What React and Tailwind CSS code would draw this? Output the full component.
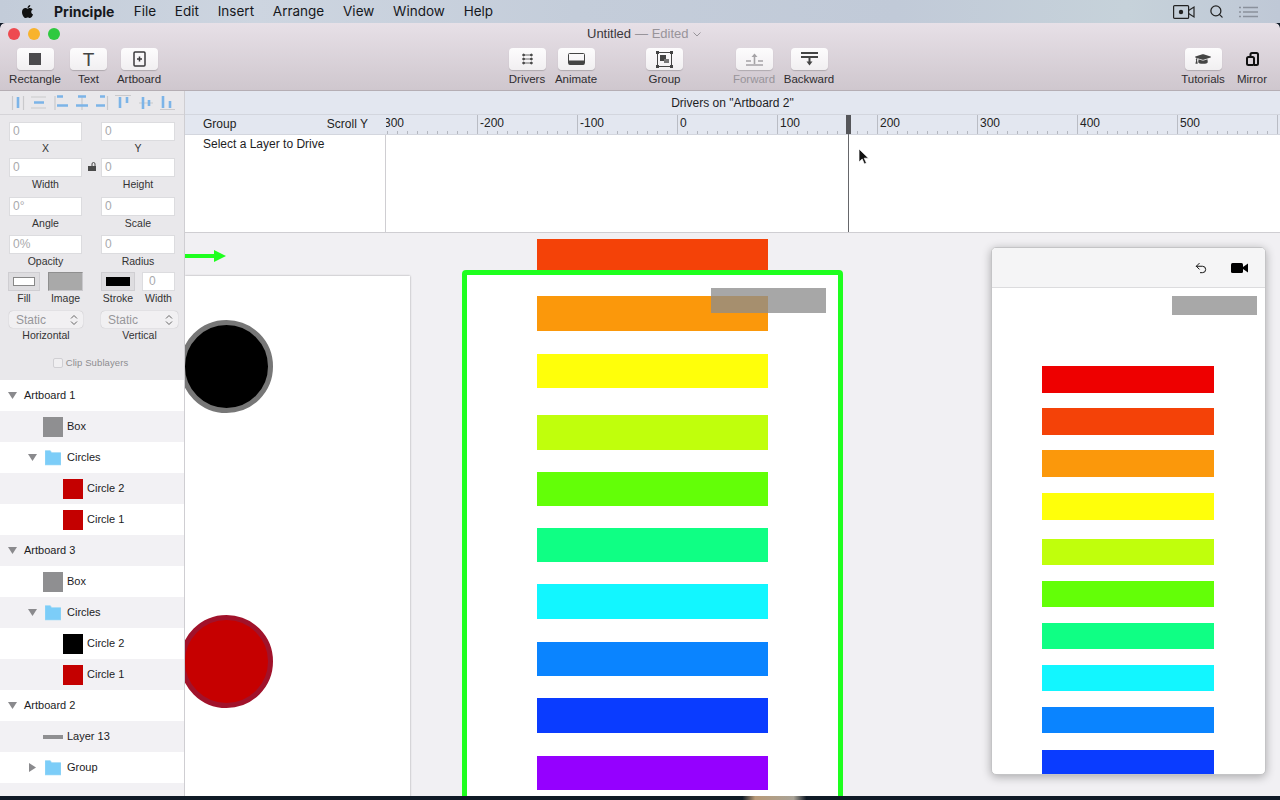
import { FaApple, FaGraduationCap } from 'react-icons/fa';
import { Search, Undo2 } from 'lucide-react';

const menus = ['File', 'Edit', 'Insert', 'Arrange', 'View', 'Window', 'Help'];

function MenuBar() {
  return (
    <div className="h-[23px] shrink-0 flex items-center text-[13.5px] text-[#16181c] font-['Inter',sans-serif] bg-[linear-gradient(90deg,#c3ccd9_0%,#cdd5e0_20%,#c4cdda_45%,#c1cad8_70%,#c6d2da_88%,#bfc8d6_100%)]">
      <FaApple className="ml-[20px] size-[15px] text-[#111]" />
      <span className="ml-[19px] font-bold text-[14px] mr-[0.5px]">Principle</span>
      {menus.map((label) => (
        <span key={label} className="ml-[18.8px]">{label}</span>
      ))}
      <span className="flex-1" />
      <svg width="22" height="14" viewBox="0 0 22 14" fill="none" stroke="#222" strokeWidth="1.2">
        <rect x="0.6" y="0.6" width="15" height="12.8" rx="1" />
        <circle cx="8" cy="7" r="2.2" fill="#222" stroke="none" />
        <path d="M15.6 5.5 21 2v10l-5.4-3.5" />
      </svg>
      <Search className="ml-[14px] size-[15px] text-[#222]" strokeWidth={2} />
      <svg className="ml-[15px] mr-[22px]" width="19" height="12" viewBox="0 0 19 12" stroke="#8a919c" strokeWidth="1.3">
        <path d="M4 1.5h15M4 6h15M4 10.5h15M0 1.5h2M0 6h2M0 10.5h2" />
      </svg>
    </div>
  );
}

function ToolItem({ label, width, children, plain, faded }) {
  return (
    <div className={`flex flex-col items-center shrink-0 ${width}`}>
      <div className={`w-[37px] h-[22px] rounded-[4px] flex items-center justify-center ${plain ? '' : 'bg-gradient-to-b from-[#fdfcfd] to-[#f1eff1] shadow-[0_1px_1px_rgba(0,0,0,0.18)]'}`}>
        {children}
      </div>
      <span className={`mt-[2px] text-[11.5px] leading-[14px] whitespace-nowrap ${faded ? 'text-[#98949a]' : 'text-[#2f2d30]'}`}>{label}</span>
    </div>
  );
}

function Toolbar() {
  return (
    <div className="relative h-[68px] shrink-0 rounded-t-[5px] border-b border-[#b5aeb4] bg-gradient-to-b from-[#e7e0e7] to-[#cfc7ce]">
      <div className="flex items-center gap-[8px] pl-[8px] h-[22px]">
        <span className="size-[12px] rounded-full bg-[#ee4a50]" />
        <span className="size-[12px] rounded-full bg-[#f8b32d]" />
        <span className="size-[12px] rounded-full bg-[#2fc93f]" />
        <div className="ml-[519px] flex items-center text-[13px] text-[#3a383b] whitespace-nowrap">
          Untitled<span className="text-[#98949a] ml-[4px]">— Edited</span>
          <svg className="ml-[4px]" width="8" height="5" viewBox="0 0 8 5" fill="none" stroke="#98949a" strokeWidth="1"><path d="M.5.5 4 4 7.5.5" /></svg>
        </div>
      </div>
      <div className="flex pt-[3px]">
        <div className="ml-[9px]" />
        <ToolItem label="Rectangle" width="w-[52px]">
          <span className="size-[12px] bg-[#4b4a4d]" />
        </ToolItem>
        <div className="ml-[9px]" />
        <ToolItem label="Text" width="w-[37px]">
          <span className="text-[19px] leading-none text-[#444]">T</span>
        </ToolItem>
        <div className="ml-[6px]" />
        <ToolItem label="Artboard" width="w-[52px]">
          <svg width="13" height="16" viewBox="0 0 13 16" fill="none" stroke="#3b3a3d" strokeWidth="1.5">
            <rect x="1" y="1" width="11" height="14" rx="1" />
            <path d="M4 8h5M6.5 5.5v5" />
          </svg>
        </ToolItem>
        <div className="ml-[342px]" />
        <ToolItem label="Drivers" width="w-[40px]">
          <svg width="11" height="12" viewBox="0 0 11 12" fill="#444" stroke="#444" strokeWidth="0.8">
            <path d="M2 2h7M2 6h7M2 10h7" />
            <circle cx="1.6" cy="2" r="1" /><circle cx="9.4" cy="2" r="1" />
            <circle cx="1.6" cy="6" r="1" /><circle cx="9.4" cy="6" r="1" />
            <circle cx="1.6" cy="10" r="1" /><circle cx="9.4" cy="10" r="1" />
          </svg>
        </ToolItem>
        <div className="ml-[4px]" />
        <ToolItem label="Animate" width="w-[50px]">
          <svg width="17" height="12" viewBox="0 0 17 12" fill="none" stroke="#444" strokeWidth="1">
            <rect x="0.5" y="0.5" width="16" height="11" rx="1" />
            <rect x="1" y="7.5" width="15" height="4" fill="#444" stroke="none" />
          </svg>
        </ToolItem>
        <div className="ml-[45px]" />
        <ToolItem label="Group" width="w-[37px]">
          <svg width="17" height="17" viewBox="0 0 17 17" fill="none" stroke="#444" strokeWidth="1">
            <rect x="1.5" y="1.5" width="14" height="14" />
            <rect x="0" y="0" width="3" height="3" fill="#444" stroke="none" />
            <rect x="14" y="0" width="3" height="3" fill="#444" stroke="none" />
            <rect x="0" y="14" width="3" height="3" fill="#444" stroke="none" />
            <rect x="14" y="14" width="3" height="3" fill="#444" stroke="none" />
            <rect x="4" y="4" width="6" height="6" fill="#444" stroke="none" />
            <rect x="8" y="8" width="5" height="4" fill="#777" stroke="none" />
          </svg>
        </ToolItem>
        <div className="ml-[49px]" />
        <ToolItem label="Forward" width="w-[44px]" faded>
          <svg width="17" height="13" viewBox="0 0 17 13" fill="#a5a3a6" stroke="#a5a3a6" strokeWidth="1.6">
            <path d="M0 8h5M12 8h5M0 12h17M8.5 3v8" fill="none" />
            <path d="M5.5 4 8.5 .5 11.500 4z" stroke="none" />
          </svg>
        </ToolItem>
        <div className="ml-[8px]" />
        <ToolItem label="Backward" width="w-[50px]">
          <svg width="17" height="14" viewBox="0 0 17 14" fill="#444" stroke="#444" strokeWidth="2">
            <path d="M0 1h17M0 5h17M8.500 5v5" fill="none" />
            <path d="M5.500 9.500 8.500 13.500 11.500 9.500z" stroke="none" />
          </svg>
        </ToolItem>
        <div className="ml-[345px]" />
        <ToolItem label="Tutorials" width="w-[48px]">
          <FaGraduationCap className="size-[16px] text-[#444]" />
        </ToolItem>
        <div className="ml-[7px]" />
        <ToolItem label="Mirror" width="w-[36px]" plain>
          <svg width="13" height="14" viewBox="0 0 13 14" fill="none" stroke="#111" strokeWidth="2">
            <path d="M4.500 5V2.500A1.500 1.500 0 0 1 6 1h4.500A1.500 1.500 0 0 1 12 2.500v9a1.500 1.500 0 0 1-1.500 1.500H8" />
            <rect x="1" y="5" width="7" height="8" rx="1.500" />
          </svg>
        </ToolItem>
      </div>
    </div>
  );
}

function AlignIcons() {
  return (
    <svg className="block" width="185" height="23" viewBox="0 91 185 23" fill="none">
      <path d="M12.500 96v14M23.500 96v14M31 97h15M31 108h15M55 96v14M82 96v14M107.500 96v14M115 95.500h16M139 103h14M160 109.500h15" stroke="#c9c9cc" strokeWidth="1.200" />
      <path d="M18 97v11M34 102.500h10M57 96.500h6M57 105.500h11M78 96.500h8M76 105.500h12M100 96.500h5M96 105.500h9M120 97v11M127 97v6M143 97v12M149 100v6M163 96v12M170 101v7" stroke="#7cb4e8" strokeWidth="2.600" />
    </svg>
  );
}

function Field({ value, label, height }) {
  return (
    <div className={`flex flex-col items-center ${height}`}>
      <div className="w-full h-[19px] shrink-0 bg-white border border-[#dcdcdf] px-[3px] text-[12px] leading-[17px] text-[#a9a9ac]">{value}</div>
      <span className="mt-[1px] text-[10.5px] leading-[12px] text-[#333]">{label}</span>
    </div>
  );
}

function StaticSelect({ label }) {
  return (
    <div className="flex flex-col items-center">
      <div className="w-full h-[17px] rounded-[4px] bg-[#f1f0f2] shadow-[0_0_1px_rgba(0,0,0,0.3)] flex items-center pl-[7px] pr-[5px] text-[12px] text-[#97979a]">
        <span className="flex-1">Static</span>
        <svg width="8" height="12" viewBox="0 0 8 12" fill="none" stroke="#666" strokeWidth="1">
          <path d="M1 4.500 4 1.500l3 3M1 7.500l3 3 3-3" />
        </svg>
      </div>
      <span className="mt-[1px] text-[10.5px] leading-[12px] text-[#333]">{label}</span>
    </div>
  );
}

function Inspector() {
  return (
    <div className="h-[289px] shrink-0 bg-[#e9e8eb]">
      <div className="border-b border-[#d5d4d8] h-[24px]">
        <AlignIcons />
      </div>
      <div className="relative px-[9px] pt-[7px]">
        <div className="grid grid-cols-[73px_74px] gap-x-[19px]">
          <Field value="0" label="X" height="h-[36px]" />
          <Field value="0" label="Y" height="h-[36px]" />
          <Field value="0" label="Width" height="h-[39px]" />
          <Field value="0" label="Height" height="h-[39px]" />
          <Field value="0°" label="Angle" height="h-[38px]" />
          <Field value="0" label="Scale" height="h-[38px]" />
          <Field value="0%" label="Opacity" height="h-[37px]" />
          <Field value="0" label="Radius" height="h-[37px]" />
        </div>
        <svg className="absolute left-[88px] top-[47px]" width="9" height="9" viewBox="0 0 9 9" fill="#4a4a4a">
          <rect x="0" y="4" width="8" height="5" />
          <path d="M4 4V2a1.500 1.500 0 0 1 3 0v2" fill="none" stroke="#4a4a4a" strokeWidth="1" />
        </svg>
        <div className="flex -ml-px">
          <div className="flex flex-col items-center w-[32px]">
            <div className="w-[32px] h-[19px] bg-[#dedde0] border border-[#cfced2] flex items-center justify-center">
              <span className="w-[22px] h-[9px] bg-white border border-[#888]" />
            </div>
            <span className="mt-[1px] text-[10.5px] leading-[12px] text-[#333]">Fill</span>
          </div>
          <div className="flex flex-col items-center w-[35px] ml-[8px]">
            <div className="w-[35px] h-[19px] bg-[#a9a9a9] border border-[#c9c8cc] border-t-[#8f8f8f] border-l-[#8f8f8f]" />
            <span className="mt-[1px] text-[10.5px] leading-[12px] text-[#333]">Image</span>
          </div>
          <div className="flex flex-col items-center w-[34px] ml-[18px]">
            <div className="w-[34px] h-[19px] bg-[#dedde0] border border-[#cfced2] flex items-center justify-center">
              <span className="w-[24px] h-[9px] bg-black" />
            </div>
            <span className="mt-[1px] text-[10.5px] leading-[12px] text-[#333]">Stroke</span>
          </div>
          <div className="flex flex-col items-center w-[33px] ml-[7px]">
            <div className="w-[33px] h-[19px] bg-white border border-[#dcdcdf] px-[6px] text-[12px] leading-[17px] text-[#a9a9ac]">0</div>
            <span className="mt-[1px] text-[10.5px] leading-[12px] text-[#333]">Width</span>
          </div>
        </div>
        <div className="mt-[7px] grid grid-cols-[74px_77px] gap-x-[18px]">
          <StaticSelect label="Horizontal" />
          <StaticSelect label="Vertical" />
        </div>
        <div className="mt-[16px] flex items-center justify-center -ml-[3px]">
          <span className="size-[10px] bg-[#f0eff1] border border-[#d0cfd3] rounded-[2px]" />
          <span className="ml-[3px] text-[9.5px] leading-[12px] text-[#8d8d90] tracking-[0.1px]">Clip Sublayers</span>
        </div>
      </div>
    </div>
  );
}

function Triangle({ open, className }) {
  return (
    <svg className={className} width="9" height="9" viewBox="0 0 9 9" fill="#8a8a8d">
      {open ? <path d="M0 1h9L4.500 8z" /> : <path d="M1 0l7 4.500L1 9z" />}
    </svg>
  );
}

function Folder() {
  return (
    <svg width="16" height="16" viewBox="0 0 16 16">
      <path d="M0 15V1.500A.8.8 0 0 1 .8.500h4.400l1.500 2h8.500a.8.8 0 0 1 .8.800V15z" fill="#7ccdf8" stroke="#a6dcf6" strokeWidth="0.600" />
    </svg>
  );
}

const layers = [
  { name: 'Artboard 1', kind: 'board' },
  { name: 'Box', kind: 'box' },
  { name: 'Circles', kind: 'folder', open: true },
  { name: 'Circle 2', kind: 'leaf', color: 'bg-[#c40000]' },
  { name: 'Circle 1', kind: 'leaf', color: 'bg-[#c40000]' },
  { name: 'Artboard 3', kind: 'board' },
  { name: 'Box', kind: 'box' },
  { name: 'Circles', kind: 'folder', open: true },
  { name: 'Circle 2', kind: 'leaf', color: 'bg-black' },
  { name: 'Circle 1', kind: 'leaf', color: 'bg-[#c40000]' },
  { name: 'Artboard 2', kind: 'board' },
  { name: 'Layer 13', kind: 'line' },
  { name: 'Group', kind: 'folder', open: false },
];

function LayerRow({ layer, odd }) {
  return (
    <div className={`h-[31px] flex items-center text-[11px] text-[#1c1c1e] ${odd ? 'bg-[#f2f1f4]' : 'bg-white'}`}>
      {layer.kind === 'board' && (
        <>
          <Triangle open className="ml-[8px]" />
          <span className="ml-[7px]">{layer.name}</span>
        </>
      )}
      {layer.kind === 'box' && (
        <>
          <span className="ml-[43px] size-[20px] bg-[#8f8f91]" />
          <span className="ml-[4px]">{layer.name}</span>
        </>
      )}
      {layer.kind === 'line' && (
        <>
          <span className="ml-[43px] w-[20px] h-[4px] bg-[#8f8f91]" />
          <span className="ml-[4px]">{layer.name}</span>
        </>
      )}
      {layer.kind === 'folder' && (
        <>
          <Triangle open={layer.open} className="ml-[28px]" />
          <span className="ml-[8px]"><Folder /></span>
          <span className="ml-[6px]">{layer.name}</span>
        </>
      )}
      {layer.kind === 'leaf' && (
        <>
          <span className={`ml-[63px] size-[20px] ${layer.color}`} />
          <span className="ml-[4px]">{layer.name}</span>
        </>
      )}
    </div>
  );
}

function Sidebar() {
  return (
    <div className="w-[185px] shrink-0 flex flex-col border-r border-[#cfced2] bg-[#f2f1f4]">
      <Inspector />
      <div>
        {layers.map((layer, i) => (
          <LayerRow key={i} layer={layer} odd={i % 2 === 1} />
        ))}
      </div>
    </div>
  );
}

const rulerMarks = ['-300', '-200', '-100', '0', '100', '200', '300', '400', '500', ''];

function Ruler() {
  return (
    <div className="flex-1 overflow-hidden flex">
      <div className="flex shrink-0 -ml-[9px]">
        {rulerMarks.map((mark, i) => (
          <div key={i} className="relative w-[100px] h-[20px] shrink-0 border-l border-[#b9bcc4]">
            <span className="absolute left-[2px] top-[1px] text-[12px] leading-[14px] text-[#222]">{mark}</span>
            <div className="absolute left-0 right-0 bottom-0 h-[4px] bg-[repeating-linear-gradient(90deg,transparent_0,transparent_9px,#b4b7bf_9px,#b4b7bf_10px)]" />
          </div>
        ))}
      </div>
    </div>
  );
}

function DriversPanel() {
  return (
    <div className="relative h-[142px] shrink-0 border-b border-[#cfced2] bg-white">
      <div className="h-[23px] bg-[#e3e7f0] flex items-center justify-center text-[12px] text-[#1d1d1f]">
        Drivers on "Artboard 2"
      </div>
      <div className="h-[21px] bg-[#e3e7f0] border-t border-b border-[#d3d6de] flex text-[12px] text-[#222]">
        <div className="w-[201px] shrink-0 pl-[18px] pr-[18px] pb-[2px] flex items-center justify-between">
          <span>Group</span>
          <span>Scroll Y</span>
        </div>
        <Ruler />
      </div>
      <div className="h-[97px] flex text-[12px] text-[#1d1d1f]">
        <div className="w-[201px] border-r border-[#cfced2] pl-[18px]">Select a Layer to Drive</div>
      </div>
      <div className="absolute left-[661px] top-[24px] w-[5px] h-[19px] bg-[#55565a]" />
      <div className="absolute left-[663px] top-[43px] w-px h-[98px] bg-[#66676b]" />
      <svg className="absolute left-[673px] top-[57px]" width="12" height="17" viewBox="0 0 12 17">
        <path d="M1 1v13l3.200-3 2.200 5 2-1-2.200-4.800H10.500z" fill="#111" stroke="#fff" strokeWidth="0.700" />
      </svg>
    </div>
  );
}

const boardBars = [
  'top-[63px] h-[35px] bg-[#fb980b]',
  'top-[121px] h-[34px] bg-[#ffff0a]',
  'top-[182px] h-[35px] bg-[#c0ff0c]',
  'top-[239px] h-[34px] bg-[#63ff07]',
  'top-[295px] h-[34px] bg-[#0fff84]',
  'top-[351px] h-[35px] bg-[#12f6ff]',
  'top-[409px] h-[34px] bg-[#0a84ff]',
  'top-[465px] h-[35px] bg-[#0a3cff]',
  'top-[523px] h-[34px] bg-[#9500ff]',
];

const mirrorBars = [
  'top-[118px] h-[27px] bg-[#ee0000]',
  'top-[160px] h-[27px] bg-[#f44208]',
  'top-[202px] h-[27px] bg-[#fb980b]',
  'top-[245px] h-[27px] bg-[#ffff0a]',
  'top-[291px] h-[26px] bg-[#c0ff0c]',
  'top-[333px] h-[26px] bg-[#63ff07]',
  'top-[375px] h-[26px] bg-[#0fff84]',
  'top-[417px] h-[26px] bg-[#12f6ff]',
  'top-[459px] h-[26px] bg-[#0a84ff]',
  'top-[502px] h-[26px] bg-[#0a3cff]',
];

function Canvas() {
  return (
    <div className="relative flex-1 overflow-hidden bg-[#f1f0f3]">
      {/* green marker arrow */}
      <svg className="absolute left-0 top-[16px]" width="42" height="14" viewBox="0 0 42 14" fill="#1eff1e">
        <path d="M0 5h29V1l12 6-12 6V9H0z" />
      </svg>

      {/* left artboard */}
      <div className="absolute left-0 top-[43px] w-[225px] h-[530px] bg-white shadow-[0_0_2px_rgba(0,0,0,0.35)]" />
      <div className="absolute left-[-5px] top-[87px] size-[93px] rounded-full bg-black border-[5px] border-[#777777]" />
      <div className="absolute left-[-5px] top-[382px] size-[93px] rounded-full bg-[#c60000] border-[5px] border-[#a1122a]" />

      {/* selected artboard */}
      <div className="absolute left-[352px] top-[6px] w-[231px] h-[32px] bg-[#f44208]" />
      <div className="absolute left-[277px] top-[37px] w-[381px] h-[540px] bg-white border-[5px] border-[#1eff1e] rounded-[4px]" />
      {boardBars.map((cls) => (
        <div key={cls} className={`absolute left-[352px] w-[231px] ${cls}`} />
      ))}
      <div className="absolute left-[526px] top-[55px] w-[115px] h-[25px] bg-[rgba(141,141,141,0.77)]" />

      {/* mirror window */}
      <div className="absolute left-[806px] top-[14px] w-[275px] h-[528px] rounded-[5px] overflow-hidden bg-white border border-[#c4c4c6] shadow-[0_2px_10px_rgba(0,0,0,0.3)]">
        <div className="h-[40px] bg-[#f5f5f6] border-b border-[#dcdcde] flex items-center justify-end">
          <Undo2 className="size-[14px] text-[#111]" strokeWidth={1.700} />
          <svg className="ml-[23px] mr-[17px]" width="17" height="10" viewBox="0 0 17 10" fill="#000">
            <rect x="0" y="0" width="12" height="10" rx="1.500" />
            <path d="M12 4 17 .5v9L12 6z" />
          </svg>
        </div>
        <div className="absolute left-[180px] top-[48px] w-[85px] h-[19px] bg-[#a8a8a8]" />
        {mirrorBars.map((cls) => (
          <div key={cls} className={`absolute left-[50px] w-[172px] ${cls}`} />
        ))}
      </div>
    </div>
  );
}

export default function App() {
  return (
    <div className="w-[1280px] h-[800px] overflow-hidden flex flex-col bg-[#101a26] font-['Liberation_Sans',sans-serif]">
      <MenuBar />
      <div className="flex-1 min-h-0 flex flex-col rounded-t-[5px] overflow-hidden">
        <Toolbar />
        <div className="flex-1 min-h-0 flex">
          <Sidebar />
          <div className="flex-1 min-w-0 flex flex-col">
            <DriversPanel />
            <Canvas />
          </div>
        </div>
      </div>
      <div className="h-[4px] shrink-0 bg-[linear-gradient(90deg,#101a26_0%,#101a26_58%,#b89a78_59%,#a9a397_62%,#101a26_63%,#101a26_100%)]" />
    </div>
  );
}
